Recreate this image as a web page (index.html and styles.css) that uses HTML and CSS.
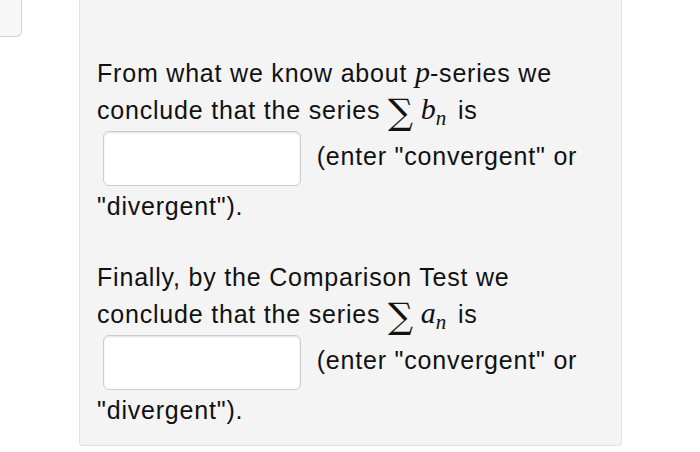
FILE: index.html
```html
<!DOCTYPE html>
<html>
<head>
<meta charset="utf-8">
<link rel="stylesheet" href="styles.css">
</head>
<body>
<div class="page">
  <div class="tab"></div>
  <div class="panel">
    <p class="para">From what we know about <span class="mi">p</span>-series we conclude that the series <span class="sum">∑</span> <span class="mi">b</span><sub class="sub">n</sub> is <input class="answer" type="text"> (enter "convergent" or "divergent").</p>
    <p class="para">Finally, by the Comparison Test we conclude that the series <span class="sum">∑</span> <span class="mi">a</span><sub class="sub">n</sub> is <input class="answer" type="text"> (enter "convergent" or "divergent").</p>
  </div>
</div>
</body>
</html>
```
FILE: styles.css
```css
html, body {
  margin: 0;
  padding: 0;
  background: #ffffff;
}
.page {
  display: flex;
  align-items: flex-start;
  font-family: "Liberation Sans", Arial, sans-serif;
  color: #111;
}
.tab {
  width: 21px;
  height: 36px;
  background: #f7f7f7;
  border: 1px solid #d4d4d4;
  border-top: none;
  border-left: none;
  border-radius: 0 0 6px 0;
  flex: none;
}
.panel {
  margin-left: 57px;
  width: 509px;
  background: #f4f4f4;
  border: 1px solid #e2e2e2;
  border-top: none;
  border-radius: 0 0 4px 4px;
  padding: 55px 15px 16px 17px;
  flex: none;
}
.para {
  margin: 0;
  font-size: 25px;
  letter-spacing: 0.8px;
  line-height: 37px;
  width: 490px;
}
.para + .para {
  margin-top: 34px;
}
.mi {
  font-family: "Liberation Serif", "Times New Roman", serif;
  font-style: italic;
  font-size: 30px;
  letter-spacing: 0;
  line-height: 0;
}
.sub {
  font-family: "Liberation Serif", "Times New Roman", serif;
  font-style: italic;
  font-size: 21px;
  letter-spacing: 0;
  vertical-align: -6px;
  line-height: 0;
  margin-right: 4px;
}
.sum {
  font-family: "DejaVu Serif", serif;
  font-size: 35px;
  letter-spacing: 0;
  vertical-align: -5px;
  line-height: 0;
}
.answer {
  box-sizing: border-box;
  width: 198px;
  height: 55px;
  margin: 2px 8px 2px 6px;
  vertical-align: middle;
  background: #ffffff;
  border: 1px solid #cccccc;
  border-radius: 6px;
  box-shadow: inset 0 1px 2px rgba(0,0,0,0.12);
  padding: 0;
}
```
